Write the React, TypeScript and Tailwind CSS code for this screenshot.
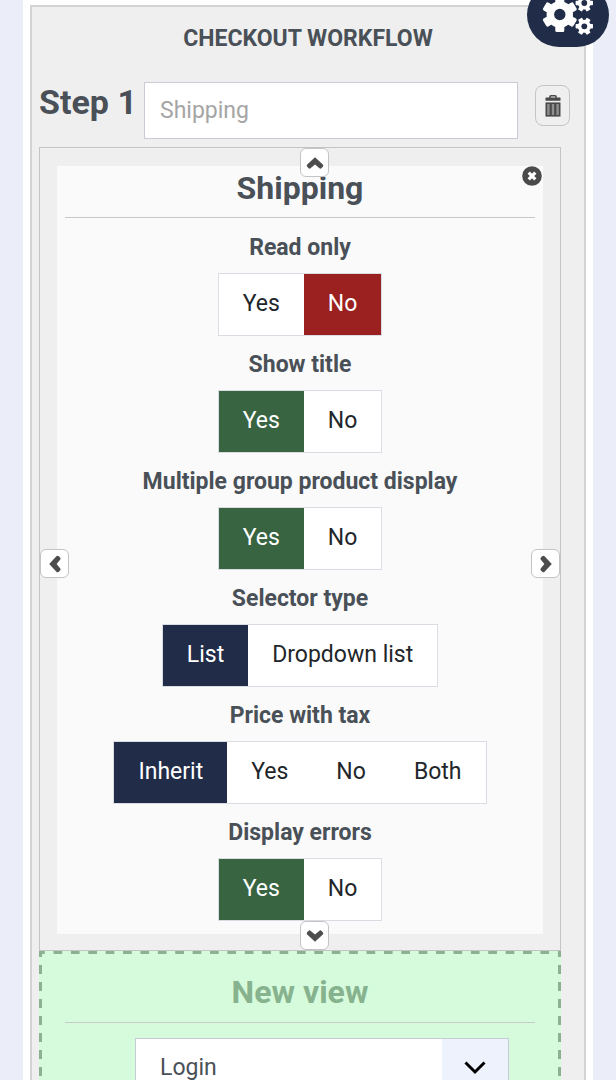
import { useState } from "react";

type Field = {
  name: string;
  label: string;
  options: string[];
  initial: string;
  yesNo?: boolean;
};

const FIELDS: Field[] = [
  { name: "readonly", label: "Read only", options: ["Yes", "No"], initial: "No", yesNo: true },
  { name: "title", label: "Show title", options: ["Yes", "No"], initial: "Yes", yesNo: true },
  { name: "group", label: "Multiple group product display", options: ["Yes", "No"], initial: "Yes", yesNo: true },
  { name: "selector", label: "Selector type", options: ["List", "Dropdown list"], initial: "List" },
  { name: "tax", label: "Price with tax", options: ["Inherit", "Yes", "No", "Both"], initial: "Inherit" },
  { name: "errors", label: "Display errors", options: ["Yes", "No"], initial: "Yes", yesNo: true },
];

function activeColor(field: Field, option: string) {
  if (!field.yesNo) return "bg-[#212d48]";
  return option === "Yes" ? "bg-[#386442]" : "bg-[#9b2020]";
}

function RadioGroup({ field }: { field: Field }) {
  const [value, setValue] = useState(field.initial);
  return (
    <fieldset className="flex w-full flex-col items-center">
      <legend className="mx-auto h-[41px] text-[23px] leading-8 font-bold">{field.label}</legend>
      <div className="mb-[13px] flex h-[63px] border border-[#d9dce3] bg-white">
        {field.options.map((option) => {
          const active = option === value;
          return (
            <label
              key={option}
              className={`relative flex items-center px-6 text-[23px] ${
                active ? `${activeColor(field, option)} text-white` : "text-[#22262a]"
              }`}
            >
              <input
                type="radio"
                name={field.name}
                value={option}
                checked={active}
                onChange={() => setValue(option)}
                className="sr-only"
              />
              {option}
            </label>
          );
        })}
      </div>
    </fieldset>
  );
}

const ROTATION = {
  up: "rotate-0",
  right: "rotate-90",
  down: "rotate-180",
  left: "-rotate-90",
};

function MoveButton({ direction, place }: { direction: keyof typeof ROTATION; place: string }) {
  return (
    <button
      type="button"
      aria-label={`Move ${direction}`}
      className={`absolute flex size-[29px] items-center justify-center rounded-md border border-[#c4c4c4] bg-white ${place}`}
    >
      <svg viewBox="0 0 18 18" className={`size-[18px] shrink-0 ${ROTATION[direction]}`}>
        <path
          d="M9 3.2 16.8 10.4Q17.8 11.4 16.8 12.8L15.6 14.1Q14.4 15.2 13.2 14.1L9 10.6 4.8 14.1Q3.6 15.2 2.4 14.1L1.2 12.8Q.2 11.4 1.2 10.4Z"
          fill="#4d4d4d"
        />
      </svg>
    </button>
  );
}

type GearProps = { cx: number; cy: number; outer: number; body: number; hole: number; tooth: number; turn: number };

function Gear({ cx, cy, outer, body, hole, tooth, turn }: GearProps) {
  return (
    <g transform={`translate(${cx} ${cy})`}>
      {[0, 60, 120].map((angle) => (
        <rect
          key={angle}
          x={-tooth / 2}
          y={-outer}
          width={tooth}
          height={outer * 2}
          rx={tooth / 6}
          transform={`rotate(${angle + turn})`}
        />
      ))}
      <circle r={body} />
      <circle r={hole} fill="#212d48" />
    </g>
  );
}

function GearsIcon() {
  return (
    <svg viewBox="0 0 50 40" className="h-10 w-[50px]" fill="currentColor">
      <Gear cx={16.8} cy={19.5} outer={17.5} body={13.2} hole={5.7} tooth={9} turn={0} />
      <Gear cx={41.3} cy={8} outer={8.7} body={6.5} hole={2.9} tooth={4.6} turn={30} />
      <Gear cx={41.3} cy={31.3} outer={8.7} body={6.5} hole={2.9} tooth={4.6} turn={30} />
    </svg>
  );
}

function TrashIcon() {
  return (
    <svg viewBox="0 0 16 22" className="h-[22px] w-4" fill="none">
      <path d="M5 3V1.6Q5 .8 5.8.8h4.4q.8 0 .8.8V3" stroke="#4a4a4a" strokeWidth="1.6" />
      <path d="M.5 3.2Q.5 2.6 1.3 2.6h13.4q.8 0 .8.6v2.6H.5z" fill="#4a4a4a" />
      <path d="M.5 7.4h15v14.2H.5z" fill="#4a4a4a" />
      <path d="M3.4 9v11M8 9v11M12.6 9v11" stroke="#8f8f8f" strokeWidth="2.4" />
    </svg>
  );
}

function CloseIcon() {
  return (
    <svg viewBox="0 0 20 20" className="size-5">
      <circle cx="10" cy="10" r="9.8" fill="#4a4a4a" />
      <path d="m6.7 6.7 6.6 6.6m0-6.6-6.6 6.6" stroke="#fff" strokeWidth="3.2" />
    </svg>
  );
}

const DASHED_FRAME =
  "bg-[linear-gradient(90deg,#8cb092_33%,transparent_33%_83%,#8cb092_83%),linear-gradient(#8cb092_33%,transparent_33%_83%,#8cb092_83%),linear-gradient(#8cb092_33%,transparent_33%_83%,#8cb092_83%)] bg-[size:calc(100%/30)_3px,3px_17px,3px_17px] bg-[position:0_0,0_0,100%_0] [background-repeat:repeat-x,repeat-y,repeat-y]";

export default function App() {
  return (
    <div className="h-screen overflow-hidden bg-[#ebeef8] px-[23px] font-[Roboto,sans-serif] text-[#495057]">
      <button
        type="button"
        aria-label="Settings"
        className="fixed -top-[17px] right-[7px] z-10 flex h-16 w-[82px] items-center justify-center rounded-full bg-[#212d48] text-white"
      >
        <GearsIcon />
      </button>
      <main className="min-h-screen bg-white px-[7px] pt-[5px]">
        <section className="border-2 border-[#d3d3d3] bg-[#efefef] pb-10">
          <h1 className="flex h-16 items-center justify-center text-[23px] font-bold">CHECKOUT WORKFLOW</h1>
          <div className="flex h-[76px] items-start px-[7px] pt-[11px]">
            <label htmlFor="step" className="w-[105px] shrink-0 text-[34px] leading-10 font-bold">
              Step 1
            </label>
            <input
              id="step"
              placeholder="Shipping"
              className="h-[57px] min-w-0 flex-1 border border-[#c9ccd6] bg-white px-[15px] text-[23px] outline-none placeholder:text-[#a5a5a5]"
            />
            <button
              type="button"
              aria-label="Delete step"
              className="mt-[3px] mr-[7px] ml-[17px] flex h-[41px] w-[35px] shrink-0 items-center justify-center rounded-lg border border-[#c4c4c4]"
            >
              <TrashIcon />
            </button>
          </div>
          <div className="mr-[23px] ml-[7px]">
            <article className="relative border border-[#c4c4c4] px-[17px] pt-[18px] pb-4">
              <div className="flex flex-col items-center bg-[#fafafa] px-2">
                <h2 className="mb-[14px] flex h-[52px] w-full justify-center border-b border-[#c8c8c8] pt-1 text-[32px] leading-9 font-bold">
                  Shipping
                </h2>
                {FIELDS.map((field) => (
                  <RadioGroup key={field.name} field={field} />
                ))}
              </div>
              <button type="button" aria-label="Remove view" className="absolute top-[18px] right-[18px]">
                <CloseIcon />
              </button>
              <MoveButton direction="up" place="top-0 left-1/2" />
              <MoveButton direction="down" place="bottom-0 left-1/2" />
              <MoveButton direction="left" place="top-1/2 left-0" />
              <MoveButton direction="right" place="top-1/2 right-0" />
            </article>
            <article className={`flex flex-col bg-[#d6fbdc] px-[26px] pt-[23px] pb-8 ${DASHED_FRAME}`}>
              <h2 className="mb-[15px] flex h-[49px] w-full justify-center border-b border-[#c8ccc8] text-[32px] leading-9 font-bold text-[#87b28e]">
                New view
              </h2>
              <div className="relative mr-[26px] ml-[70px]">
                <select
                  aria-label="New view"
                  className="h-[60px] w-full appearance-none border border-[#c6ccd4] bg-white px-6 text-[23px]"
                >
                  <option>Login</option>
                </select>
                <span className="pointer-events-none absolute inset-y-px right-px flex w-[66px] items-center justify-center bg-[#eef2fc]">
                  <svg viewBox="0 0 22 14" className="h-[14px] w-[22px]" fill="none" stroke="#000" strokeWidth="3">
                    <path d="m1.5 1.5 9.5 9.5 9.5-9.5" />
                  </svg>
                </span>
              </div>
            </article>
          </div>
        </section>
      </main>
    </div>
  );
}
